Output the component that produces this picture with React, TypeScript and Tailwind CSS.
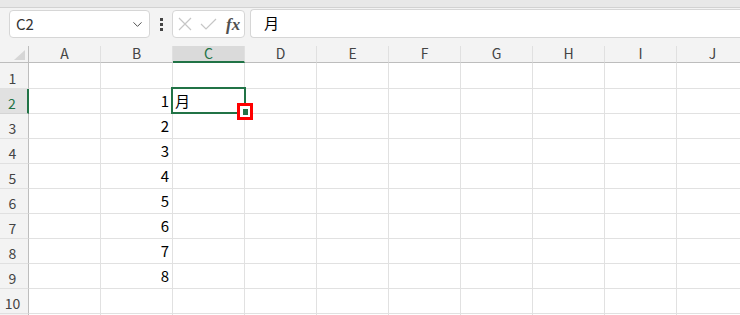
import { ChevronDown } from "lucide-react"

const cols = ["A", "B", "C", "D", "E", "F", "G", "H", "I", "J"]
const rows = [1, 2, 3, 4, 5, 6, 7, 8, 9, 10, 11]
const values: Record<number, number> = { 2: 1, 3: 2, 4: 3, 5: 4, 6: 5, 7: 6, 8: 7, 9: 8 }

const font = { fontFamily: '"Noto Sans CJK JP", "Noto Sans", sans-serif' }

function Cell({ row, col }: { row: number; col: string }) {
  const selected = row === 2 && col === "C"
  return (
    <div className="relative border-r border-b border-[#e1e1e1] bg-white">
      {col === "B" && values[row] !== undefined && (
        <div className="absolute right-[3px] bottom-[3px] text-[15px] leading-[18px] text-black">{values[row]}</div>
      )}
      {selected && (
        <>
          <div className="absolute left-[2px] bottom-[3px] text-[15px] leading-[18px] text-black">月</div>
          <div className="absolute -left-[2px] -top-[2px] w-[75px] h-[27px] border-2 border-[#217346] z-10" />
          <div className="absolute left-[64px] top-[14px] w-[16px] h-[17px] border-[3px] border-[#ff0000] bg-white z-20 flex items-center justify-center">
            <div className="w-[5px] h-[6px] bg-[#217346]" />
          </div>
        </>
      )}
    </div>
  )
}

export default function App() {
  return (
    <div className="w-[740px] h-[315px] overflow-hidden bg-[#f3f3f3] text-[#333]" style={font}>
      <div className="h-[8px] bg-[#e8e8e8] border-b border-[#d2d2d2]" />
      <div className="h-[38px] flex items-start pt-[2px]">
        <div className="ml-[9px] w-[141px] h-[28px] bg-white border border-[#d6d6d6] rounded-[4px] flex items-center justify-between pl-[6px] pr-[4px]">
          <span className="text-[15px] text-[#333]">C2</span>
          <ChevronDown size={15} strokeWidth={1.5} className="text-[#444]" />
        </div>
        <div className="w-[22px] h-[28px] flex flex-col items-center justify-center gap-[2px]">
          <span className="w-[3px] h-[3px] bg-[#444]" />
          <span className="w-[3px] h-[3px] bg-[#444]" />
          <span className="w-[3px] h-[3px] bg-[#444]" />
        </div>
        <div className="w-[73px] h-[28px] bg-white border border-[#d6d6d6] rounded-[4px] flex items-center pl-[5px] gap-[8px]">
          <svg width="14" height="14" viewBox="0 0 14 14" className="shrink-0">
            <path d="M1 1L13 13M13 1L1 13" stroke="#c6c6c6" strokeWidth="1.2" fill="none" />
          </svg>
          <svg width="17" height="12" viewBox="0 0 17 12" className="shrink-0">
            <path d="M1 6L6 11L16 1" stroke="#c6c6c6" strokeWidth="1.2" fill="none" />
          </svg>
          <span
            className="text-[17px] italic font-bold text-[#505050] leading-none ml-[1px]"
            style={{ fontFamily: '"Liberation Serif", serif' }}
          >
            fx
          </span>
        </div>
        <div className="ml-[5px] flex-1 h-[29px] bg-white border border-r-0 border-[#d6d6d6] rounded-l-[4px] flex items-center pl-[13px] -mt-[1px]">
          <span className="text-[15px] text-black">月</span>
        </div>
      </div>
      <div className="grid grid-cols-[29px_repeat(10,72px)] grid-rows-[17px_26px_repeat(10,25px)]">
        <div className="relative border-r border-b border-[#bdbdbd] bg-[#f3f3f3]">
          <svg width="11" height="10" viewBox="0 0 11 10" className="absolute right-[3px] bottom-[2px]">
            <path d="M11 0L11 10L0 10Z" fill="#d6d6d6" />
          </svg>
        </div>
        {cols.map((c) =>
          c === "C" ? (
            <div
              key={c}
              className="border-r border-[#e0e0e0] border-b-2 border-b-[#217346] bg-[#dadada] text-[#217346] text-[14px] leading-none flex items-end justify-center pb-[1px]"
            >
              {c}
            </div>
          ) : (
            <div
              key={c}
              className="border-r border-[#e0e0e0] border-b border-b-[#bdbdbd] bg-[#f3f3f3] text-[#444] text-[14px] leading-none flex items-end justify-center pb-[2px]"
            >
              {c}
            </div>
          )
        )}
        {rows.map((r) => (
          <div key={r} className="contents">
            {r === 2 ? (
              <div className="border-r-2 border-r-[#217346] border-b border-b-[#d4d4d4] bg-[#e1e1e1] text-[#217346] text-[14px] leading-none flex items-end justify-center pb-[3px] pr-[3px]">
                {r}
              </div>
            ) : (
              <div className="border-r border-r-[#bdbdbd] border-b border-b-[#e0e0e0] bg-[#f3f3f3] text-[#444] text-[14px] leading-none flex items-end justify-center pb-[3px] pr-[3px]">
                {r < 11 ? r : ""}
              </div>
            )}
            {cols.map((c) => (
              <Cell key={c} row={r} col={c} />
            ))}
          </div>
        ))}
      </div>
    </div>
  )
}
